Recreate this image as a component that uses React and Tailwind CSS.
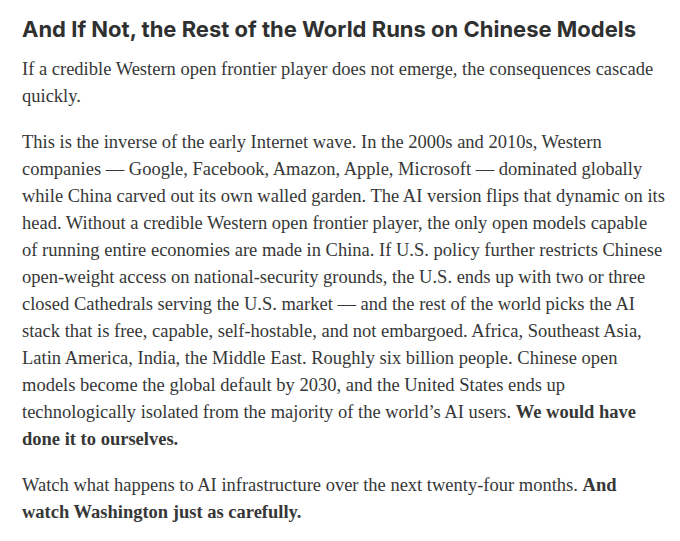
import React from "react";

const intro = [
  "If a credible Western open frontier player does not emerge, the consequences cascade",
  "quickly.",
];

const body = [
  "This is the inverse of the early Internet wave. In the 2000s and 2010s, Western",
  "companies — Google, Facebook, Amazon, Apple, Microsoft — dominated globally",
  "while China carved out its own walled garden. The AI version flips that dynamic on its",
  "head. Without a credible Western open frontier player, the only open models capable",
  "of running entire economies are made in China. If U.S. policy further restricts Chinese",
  "open-weight access on national-security grounds, the U.S. ends up with two or three",
  "closed Cathedrals serving the U.S. market — and the rest of the world picks the AI",
  "stack that is free, capable, self-hostable, and not embargoed. Africa, Southeast Asia,",
  "Latin America, India, the Middle East. Roughly six billion people. Chinese open",
  "models become the global default by 2030, and the United States ends up",
];

const Line = ({ children }) => (
  <span className="block whitespace-nowrap">{children}</span>
);

export default function App() {
  return (
    <div className="w-[680px] h-[541px] overflow-hidden bg-white px-[22px] pt-[15px] text-[#363737]">
      <h2 className="font-['Inter',sans-serif] text-[22px] leading-[28px] font-bold text-[#2f3030] whitespace-nowrap">
        And If Not, the Rest of the World Runs on Chinese Models
      </h2>
      <div className="font-['Liberation_Serif',serif] text-[18.5px] leading-[27px]">
        <p className="mt-[13px]">
          {intro.map((l) => (
            <Line key={l}>{l}</Line>
          ))}
        </p>
        <p className="mt-[19px]">
          {body.map((l) => (
            <Line key={l}>{l}</Line>
          ))}
          <Line>
            technologically isolated from the majority of the world’s AI users.{" "}
            <strong className="font-bold">We would have</strong>
          </Line>
          <Line>
            <strong className="font-bold">done it to ourselves.</strong>
          </Line>
        </p>
        <p className="mt-[19px]">
          <Line>
            Watch what happens to AI infrastructure over the next twenty-four months.{" "}
            <strong className="font-bold">And</strong>
          </Line>
          <Line>
            <strong className="font-bold">watch Washington just as carefully.</strong>
          </Line>
        </p>
      </div>
    </div>
  );
}
